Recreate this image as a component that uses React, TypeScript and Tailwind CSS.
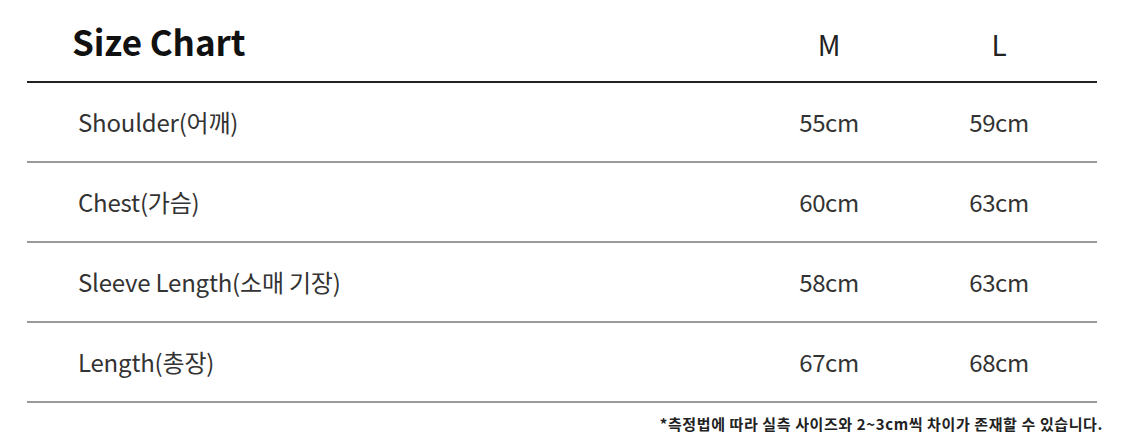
const rows = [
  { label: 'Shoulder(어깨)', m: '55cm', l: '59cm' },
  { label: 'Chest(가슴)', m: '60cm', l: '63cm' },
  { label: 'Sleeve Length(소매 기장)', m: '58cm', l: '63cm' },
  { label: 'Length(총장)', m: '67cm', l: '68cm' },
];

const font = { fontFamily: '"Noto Sans CJK KR", "Noto Sans", sans-serif' };

export default function App() {
  return (
    <div className="w-[1125px] h-[448px] bg-white text-[#222]" style={font}>
      <div className="pl-[27px] pr-[28px]">
        {/* header */}
        <div className="grid grid-cols-[1fr_170px_170px_13px] h-[83px] items-center border-b-[2px] border-[#222]">
          <h1 className="pl-[45px] text-[35px] font-bold tracking-[-0.1px] text-[#111] leading-none">Size Chart</h1>
          <div className="text-center text-[28px] font-normal text-[#222] pt-[6px]">M</div>
          <div className="text-center text-[28px] font-normal text-[#222] pt-[6px]">L</div>
          <div />
        </div>

        {/* rows */}
        {rows.map((r) => (
          <div
            key={r.label}
            className="grid grid-cols-[1fr_170px_170px_13px] h-[80px] items-center border-b-[2px] border-[#9a9a9a]"
          >
            <div className="pl-[51px] text-[24px] font-normal tracking-[-0.2px] text-[#333]">{r.label}</div>
            <div className="text-center text-[24px] font-normal tracking-[-0.4px] text-[#333]">{r.m}</div>
            <div className="text-center text-[24px] font-normal tracking-[-0.4px] text-[#333]">{r.l}</div>
            <div />
          </div>
        ))}
      </div>

      {/* note */}
      <div className="flex justify-end pr-[22px] pt-[10px]">
        <p className="text-[15px] font-bold text-[#222] tracking-[0.6px]">
          *측정법에 따라 실측 사이즈와 2~3cm씩 차이가 존재할 수 있습니다.
        </p>
      </div>
    </div>
  );
}
